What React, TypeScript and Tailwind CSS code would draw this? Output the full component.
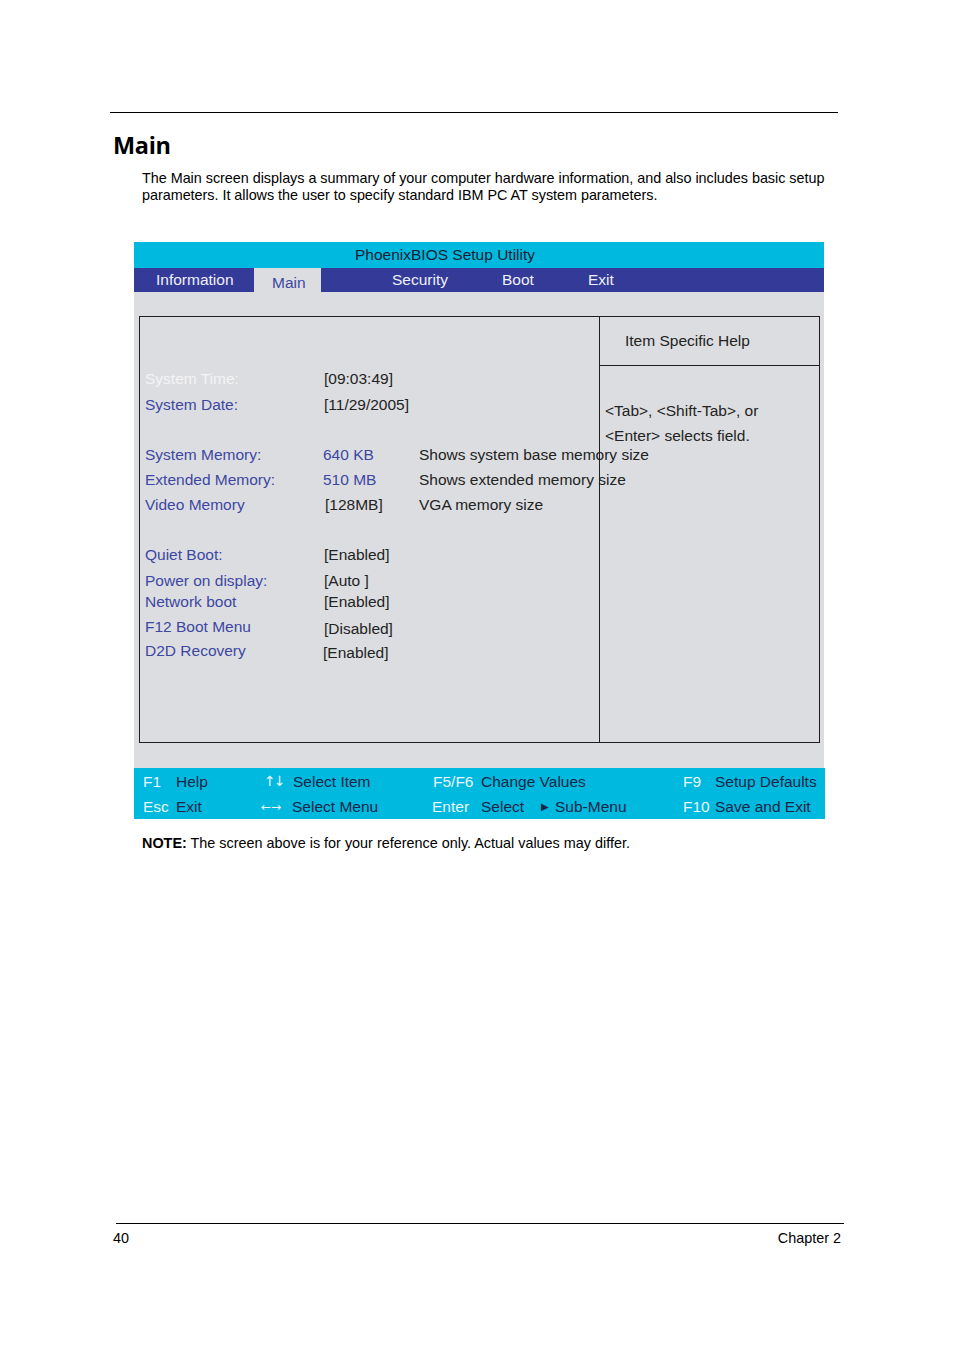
import React from 'react';

const labelBlue = 'text-[#3c47a3]';

interface Row {
  label: string;
  value: string;
  desc?: string;
  blueValue?: boolean;
  white?: boolean;
  h: number;
  vx?: number;
  low?: boolean;
}

const rows: Row[] = [
  { label: 'System Time:', value: '[09:03:49]', white: true, h: 26 },
  { label: 'System Date:', value: '[11/29/2005]', h: 25 },
  { label: '', value: '', h: 25 },
  { label: 'System Memory:', value: '640 KB', blueValue: true, desc: 'Shows system base memory size', h: 25, vx: -1 },
  { label: 'Extended Memory:', value: '510 MB', blueValue: true, desc: 'Shows extended memory size', h: 25, vx: -1 },
  { label: 'Video Memory', value: '[128MB]', desc: 'VGA memory size', h: 25, vx: 1 },
  { label: '', value: '', h: 25 },
  { label: 'Quiet Boot:', value: '[Enabled]', h: 26 },
  { label: 'Power on display:', value: '[Auto ]', h: 26 },
  { label: 'Network boot', value: '[Enabled]', h: 16 },
  { label: 'F12 Boot Menu', value: '[Disabled]', h: 34, low: true },
  { label: 'D2D Recovery', value: '[Enabled]', h: 14, vx: -1, low: true },
];

function Key({ k, w }: { k: string; w: string }) {
  return <span className={`${w} shrink-0 text-[#eaf7fc]`}>{k}</span>;
}

function Desc({ w, children }: { w: string; children: React.ReactNode }) {
  return <span className={`${w} shrink-0 text-[#1c2647]`}>{children}</span>;
}

export default function App() {
  return (
    <div className="w-[954px] h-[1351px] bg-white text-black flex flex-col font-['Liberation_Sans',Arial,sans-serif]">
      <div className="mt-[112px] ml-[110px] w-[728px] h-px bg-black" />

      <h1 className="ml-[113px] mt-[18px] text-[23.5px] leading-[28px] font-bold font-['Open_Sans',sans-serif] tracking-[-0.3px]">
        Main
      </h1>

      <p className="ml-[142px] mt-[11px] w-[720px] text-[14.4px] leading-[17px] tracking-[-0.03px]">
        The Main screen displays a summary of your computer hardware information, and also includes basic setup
        <br />
        parameters. It allows the user to specify standard IBM PC AT system parameters.
      </p>

      {/* BIOS screen */}
      <div className="ml-[134px] mt-[38px] w-[691px] text-[15.5px]">
        <div className="w-[690px] h-[26px] bg-[#00b9df] flex items-center pl-[221px] text-[#1b1d33]">
          PhoenixBIOS Setup Utility
        </div>
        <div className="w-[690px] h-[24px] bg-[#333a97] flex items-center text-[#eef0fa]">
          <span className="ml-[22px] w-[98px]">Information</span>
          <span className="w-[67px] h-full bg-[#dcdde0] pl-[18px] pt-[3px] text-[#3c47a3]">Main</span>
          <span className="ml-[71px] w-[110px]">Security</span>
          <span className="w-[86px]">Boot</span>
          <span>Exit</span>
        </div>

        <div className="w-[690px] h-[476px] bg-[#dcdde0] pt-[24px] pl-[5px]">
          <div className="w-[681px] h-[427px] border border-[#1f1f1f] flex">
            {/* left panel */}
            <div className="w-[459px] shrink-0 pt-[49px] pl-[5px]">
              {rows.map((r, i) => (
                <div key={i} className="flex items-center whitespace-nowrap" style={{ height: r.h }}>
                  <span className={`w-[179px] shrink-0 ${r.white ? 'text-[#f4f4f6]' : labelBlue}`}>{r.label}</span>
                  <span
                    className={`w-[95px] shrink-0 ${r.blueValue ? labelBlue : 'text-[#232323]'} ${r.low ? 'pt-[4px]' : ''}`}
                    style={{ marginLeft: r.vx ?? 0, marginRight: -(r.vx ?? 0) }}
                  >
                    {r.value}
                  </span>
                  {r.desc && <span className="text-[#232323]">{r.desc}</span>}
                </div>
              ))}
            </div>
            {/* right panel */}
            <div className="flex-1 border-l border-[#1f1f1f] flex flex-col text-[#232323]">
              <div className="h-[49px] border-b border-[#1f1f1f] flex items-center pl-[25px]">Item Specific Help</div>
              <div className="pt-[32px] pl-[5px] leading-[25px]">
                <div>&lt;Tab&gt;, &lt;Shift-Tab&gt;, or</div>
                <div>&lt;Enter&gt; selects field.</div>
              </div>
            </div>
          </div>
        </div>

        {/* footer */}
        <div className="w-[691px] h-[51px] bg-[#00b9df] pl-[9px] pt-[1px] flex flex-col whitespace-nowrap">
          <div className="h-[25px] flex items-center">
            <Key k="F1" w="w-[33px]" />
            <Desc w="w-[88px]">Help</Desc>
            <span className="w-[29px] shrink-0 text-[#eaf7fc] text-[14px] font-['DejaVu_Sans',sans-serif] tracking-[-2px]">↑↓</span>
            <Desc w="w-[140px]">Select Item</Desc>
            <Key k="F5/F6" w="w-[48px]" />
            <Desc w="w-[202px]">Change Values</Desc>
            <Key k="F9" w="w-[32px]" />
            <Desc w="w-[110px]">Setup Defaults</Desc>
          </div>
          <div className="h-[25px] flex items-center">
            <Key k="Esc" w="w-[33px]" />
            <Desc w="w-[85px]">Exit</Desc>
            <span className="w-[31px] shrink-0 text-[#eaf7fc] text-[12px] font-['DejaVu_Sans',sans-serif]">←→</span>
            <Desc w="w-[140px]">Select Menu</Desc>
            <Key k="Enter" w="w-[49px]" />
            <Desc w="w-[60px]">Select</Desc>
            <span className="w-[14px] shrink-0 text-[#1c2647] text-[10px]">▶</span>
            <Desc w="w-[128px]">Sub-Menu</Desc>
            <Key k="F10" w="w-[32px]" />
            <Desc w="w-[110px]">Save and Exit</Desc>
          </div>
        </div>
      </div>

      <p className="ml-[142px] mt-[16px] text-[14.4px] leading-[17px]">
        <span className="font-bold">NOTE:</span> The screen above is for your reference only. Actual values may differ.
      </p>

      <div className="mt-[371px] ml-[116px] w-[728px] h-px bg-black" />
      <div className="mt-[6px] ml-[113px] w-[728px] flex justify-between text-[14.4px] leading-[17px]">
        <span>40</span>
        <span>Chapter 2</span>
      </div>
    </div>
  );
}
